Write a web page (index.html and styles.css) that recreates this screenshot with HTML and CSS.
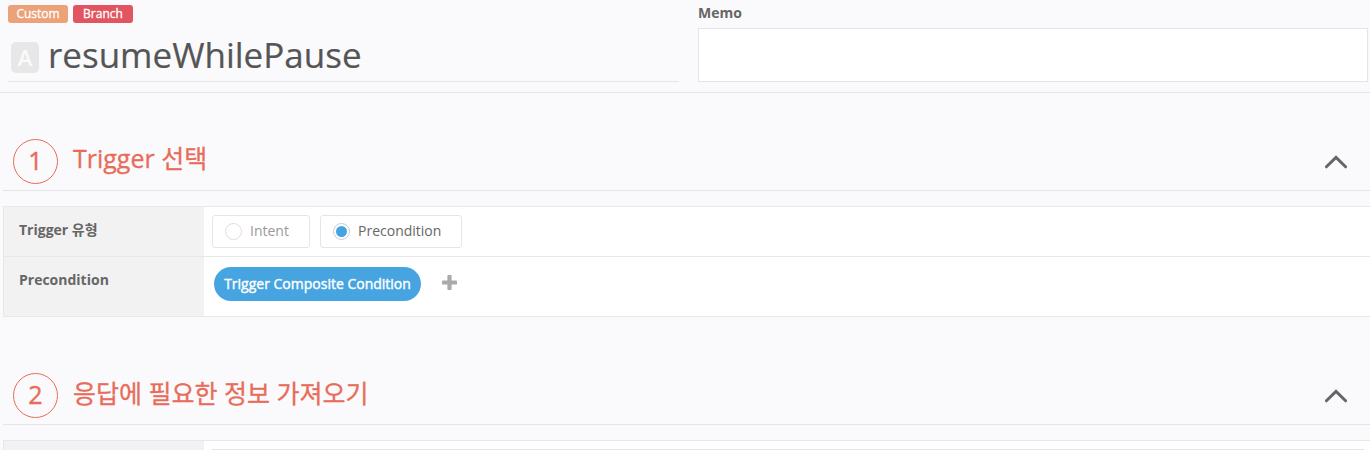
FILE: index.html
```html
<!DOCTYPE html>
<html lang="ko">
<head>
<meta charset="utf-8">
<title>resumeWhilePause</title>
<link rel="stylesheet" href="styles.css">
</head>
<body>
<header class="task">
  <div class="task-main">
    <div class="tags"><span class="tag tag-custom">Custom</span><span class="tag tag-branch">Branch</span></div>
    <div class="name-row"><span class="type">A</span><h1 class="name">resumeWhilePause</h1></div>
  </div>
  <div class="memo">
    <div class="memo-label">Memo</div>
    <div class="memo-box"></div>
  </div>
</header>
<section class="step">
  <div class="step-head">
    <span class="num">1</span>
    <h2 class="step-title step-title-mixed">Trigger 선택</h2>
    <svg class="chevron" width="24" height="16" viewBox="0 0 24 16"><path d="M2.4 12.800 12 3.400 21.600 12.800"/></svg>
  </div>
  <div class="table">
    <div class="row row-type">
      <div class="label">Trigger 유형</div>
      <div class="cell">
        <div class="option option-off"><span class="radio"></span><span class="opt-text">Intent</span></div>
        <div class="option option-on"><span class="radio radio-on"></span><span class="opt-text">Precondition</span></div>
      </div>
    </div>
    <div class="row row-cond">
      <div class="label">Precondition</div>
      <div class="cell cell-cond">
        <span class="pill">Trigger Composite Condition</span>
        <svg class="plus" width="15" height="15" viewBox="0 0 15 15"><path d="M6.3 0h2.4q.9 0 .9.9v4.5h4.5q.9 0 .9.9v2.4q0 .9-.9.9H9.600v4.500q0 .9-.9.9H6.300q-.9 0-.9-.9V9.600H.9Q0 9.600 0 8.700V6.300q0-.9.9-.9h4.500V.9q0-.9.9-.9z"/></svg>
      </div>
    </div>
  </div>
</section>
<section class="step step-last">
  <div class="step-head">
    <span class="num">2</span>
    <h2 class="step-title">응답에 필요한 정보 가져오기</h2>
    <svg class="chevron" width="24" height="16" viewBox="0 0 24 16"><path d="M2.4 12.800 12 3.400 21.600 12.800"/></svg>
  </div>
  <div class="table">
    <div class="row row-next">
      <div class="label label-empty"></div>
      <div class="cell"><div class="panel"></div></div>
    </div>
  </div>
</section>
</body>
</html>
```
FILE: styles.css
```css
* { box-sizing: border-box; }
body {
  margin: 0;
  height: 450px;
  overflow: hidden;
  background: #fafafc;
  color: #666;
  font-family: "Open Sans", "Noto Sans CJK KR", sans-serif;
  font-size: 14px;
}
h1, h2 { margin: 0; font-weight: 400; }
.task {
  display: flex;
  justify-content: space-between;
  height: 93px;
  padding: 0 2px 0 8px;
  border-bottom: 1px solid #e5e5e7;
}
.task-main {
  width: 671px;
  height: 82px;
  padding-top: 5px;
  border-bottom: 1px solid #e5e5e7;
}
.tags { display: flex; gap: 5px; }
.tag {
  width: 60px;
  height: 18px;
  border-radius: 3px;
  color: #fff;
  font-size: 12px;
  line-height: 17px;
  text-align: center;
  -webkit-text-stroke: 0.3px #fff;
}
.tag-custom { background: #eba278; }
.tag-branch { background: #e15460; }
.name-row { display: flex; padding: 6px 0 0 3px; }
.type {
  width: 28px;
  height: 31px;
  margin: 13px 9px 0 0;
  border-radius: 5px;
  background: #e7e7e7;
  color: #fafafa;
  font-size: 22px;
  font-weight: 600;
  line-height: 31px;
  text-align: center;
}
.name {
  color: #555;
  font-size: 35px;
  line-height: 51px;
  -webkit-text-stroke: 0.2px #555;
}
.memo { width: 670px; }
.memo-label { height: 28px; line-height: 26px; font-weight: 700; }
.memo-box { height: 54px; border: 1px solid #e5e5e7; background: #fff; }
.step { height: 234px; padding-left: 3px; }
.step-last { height: 123px; overflow: hidden; }
.step-head {
  display: flex;
  height: 98px;
  padding: 46px 22px 0 10px;
  border-bottom: 1px solid #e5e5e7;
  color: #e86c5a;
}
.num {
  width: 45px;
  height: 45px;
  border: 1px solid #e86c5a;
  border-radius: 50%;
  font-size: 25px;
  line-height: 41px;
  text-align: center;
  -webkit-text-stroke: 0.4px #e86c5a;
}
.step-title {
  margin-left: 15px;
  font-size: 25px;
  line-height: 40px;
  white-space: nowrap;
  -webkit-text-stroke: 0.3px #e86c5a;
}
.step-title-mixed { line-height: 38px; }
.chevron {
  margin: 15px 0 0 auto;
  fill: none;
  stroke: #666;
  stroke-width: 3;
  stroke-linecap: round;
}
.table {
  margin-top: 15px;
  border-top: 1px solid #e8e8e9;
  border-left: 1px solid #e8e8e9;
  background: #fff;
}
.row { display: flex; border-bottom: 1px solid #e8e8e9; }
.row-type { height: 50px; }
.row-cond { height: 60px; }
.row-next { height: 9px; border-bottom: 0; }
.label {
  width: 200px;
  padding: 13px 0 0 15px;
  background: #f2f2f2;
  font-weight: 700;
  line-height: 20px;
}
.label-empty { padding: 0; }
.cell { display: flex; flex: 1; gap: 10px; padding: 8px 6px 0 8px; }
.option {
  display: flex;
  align-items: center;
  height: 33px;
  padding: 0 0 1px 12px;
  border: 1px solid #e5e5e5;
  border-radius: 3px;
}
.option-off { width: 98px; color: #999; }
.option-on { width: 142px; }
.opt-text { padding-bottom: 2px; }
.radio {
  width: 17px;
  height: 17px;
  margin: 1px 8px 0 0;
  border: 1px solid #ddd;
  border-radius: 50%;
  background: #fff;
}
.radio-on { padding: 2px; border-color: #c8ccd4; background: #44a4e0 content-box; }
.cell-cond { gap: 21px; padding: 10px 0 0 10px; }
.pill {
  width: 207px;
  height: 34px;
  border-radius: 17px;
  background: #46a5e0;
  color: #fff;
  line-height: 33px;
  text-align: center;
  white-space: nowrap;
  -webkit-text-stroke: 0.4px #fff;
}
.plus { margin-top: 8px; fill: #aaa; }
.panel { flex: 1; height: 1px; background: #e5e5e5; }
```
